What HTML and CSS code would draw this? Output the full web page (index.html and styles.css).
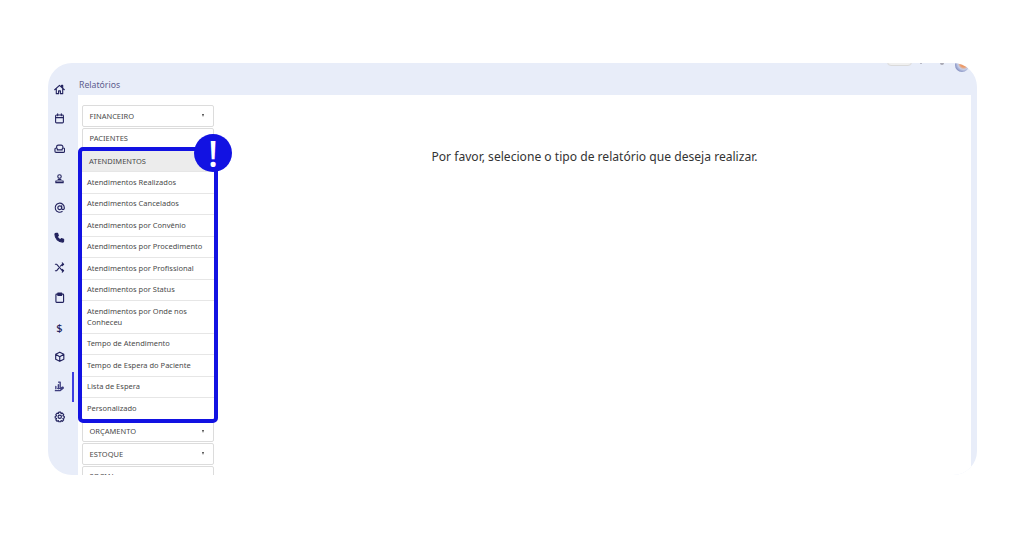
FILE: index.html
```html
<!DOCTYPE html>
<html lang="pt-BR">
<head>
<meta charset="utf-8">
<title>Relatórios</title>
<link rel="stylesheet" href="styles.css">
</head>
<body>
<div class="app">
  <nav class="rail">
    <svg class="ic" viewBox="0 0 24 24"><path d="M1.500 12.500 12 3l10.500 9.500M5 10v11h5v-6h4v6h5V10M16.500 6V3H19v5.500"/></svg>
    <svg class="ic" viewBox="0 0 24 24"><rect x="3.500" y="4.500" width="17" height="17" rx="2"/><path d="M3.500 10h17M8 1.500V6M16 1.500V6"/></svg>
    <svg class="ic ic-wide" viewBox="0 0 24 24"><path d="M5.500 10.500V8a3.500 3.500 0 0 1 3.500-3.500h6A3.500 3.500 0 0 1 18.500 8v2.500M2 13a2.500 2.500 0 0 1 5 0v1.500h10V13a2.500 2.500 0 0 1 5 0v4a2.500 2.500 0 0 1-2.500 2.500h-15A2.500 2.500 0 0 1 2 17z"/></svg>
    <svg class="ic" viewBox="0 0 24 24"><circle cx="12" cy="7.500" r="3.800"/><path d="M9 14h6M4 17.500h16V21H4z"/></svg>
    <svg class="ic ic-wide" viewBox="0 0 24 24"><circle cx="12" cy="12" r="4"/><path d="M16 8v5.500a2.800 2.800 0 0 0 5.500 0V12A9.500 9.500 0 1 0 17 20"/></svg>
    <svg class="ic" viewBox="0 0 24 24"><path class="solid" d="M4 3h4l1.500 5L7 10.500a13 13 0 0 0 6.500 6.500l2.500-2.500 5 1.500v4a2 2 0 0 1-2 2A17 17 0 0 1 2 5a2 2 0 0 1 2-2z"/></svg>
    <svg class="ic" viewBox="0 0 24 24"><path d="M3 5h3l12 14h3M3 19h3l4-5M14 9l4-4h3M18 2l3 3-3 3M18 16l3 3-3 3"/></svg>
    <svg class="ic ic-wide" viewBox="0 0 24 24"><rect x="4" y="4.500" width="16" height="17" rx="1.500"/><path class="solid" d="M8 2h8v5H8z"/></svg>
    <span class="dollar">$</span>
    <svg class="ic ic-wide" viewBox="0 0 24 24"><path d="M12 2.500 20.500 7v10L12 21.500 3.500 17V7zM3.500 7 12 12l8.500-5M12 12v9.500"/></svg>
    <span class="rail-active">
      <svg class="ic ic-soft" viewBox="0 0 24 24"><path d="M4 12v5M9.500 8v9M10 2.500h3.500V13M3 21h10l7-5.500a1.500 1.500 0 0 0-2-2L14.500 16H8"/></svg>
    </span>
    <svg class="ic ic-wide" viewBox="0 0 24 24"><path d="m10 2.500h4l.8 3 2.700-1.200 2.700 3.200-1.700 2.500 3 1.500v3l-3 1.200 1.700 2.800-2.700 3-2.700-1.500-.8 2.500h-4l-.8-2.500-2.700 1.500-2.700-3 1.700-2.800-3-1.200v-3l3-1.500-1.700-2.500 2.700-3.200 2.700 1.200z"/><circle cx="12" cy="12" r="3.500"/></svg>
  </nav>

  <div class="main">
    <header class="topbar">
      <h1 class="page-title">Relatórios</h1>
      <div class="top-tools">
        <span class="toggle"></span>
        <span class="dot dot-a"></span>
        <span class="dot dot-b"></span>
        <span class="avatar"></span>
      </div>
    </header>

    <section class="panel">
      <aside class="menu">
        <button class="group">FINANCEIRO<i class="caret"></i></button>
        <button class="group">PACIENTES</button>
        <div class="open-group">
          <div class="open-title">ATENDIMENTOS</div>
          <a class="item">Atendimentos Realizados</a>
          <a class="item">Atendimentos Cancelados</a>
          <a class="item">Atendimentos por Convênio</a>
          <a class="item">Atendimentos por Procedimento</a>
          <a class="item">Atendimentos por Profissional</a>
          <a class="item">Atendimentos por Status</a>
          <a class="item">Atendimentos por Onde nos Conheceu</a>
          <a class="item">Tempo de Atendimento</a>
          <a class="item">Tempo de Espera do Paciente</a>
          <a class="item">Lista de Espera</a>
          <a class="item">Personalizado</a>
          <div class="highlight"></div>
          <div class="badge">!</div>
        </div>
        <button class="group">ORÇAMENTO<i class="caret"></i></button>
        <button class="group">ESTOQUE<i class="caret"></i></button>
        <button class="group">SOCIAL<i class="caret"></i></button>
      </aside>
      <p class="prompt">Por favor, selecione o tipo de relatório que deseja realizar.</p>
    </section>
  </div>
</div>
</body>
</html>
```
FILE: styles.css
```css
* { box-sizing: border-box; }
html, body { margin: 0; height: 100%; background: #fff; }
body {
  padding: 63px 47px 63px 48px;
  font-family: "Noto Sans", "Open Sans", sans-serif;
  overflow: hidden;
}
.app {
  display: flex;
  height: 412px;
  background: #e8edf9;
  border-radius: 24px;
  overflow: hidden;
}
.rail {
  width: 30px;
  flex: none;
  display: flex;
  flex-direction: column;
  align-items: center;
  padding: 20.500px 7px 0 0;
  gap: 18.800px;
}
.ic {
  width: 11px;
  height: 11px;
  flex: none;
  fill: none;
  stroke: #23235f;
  stroke-width: 2.400;
  stroke-linejoin: round;
  stroke-linecap: round;
  display: block;
}
.ic-wide { width: 11.500px; height: 11.500px; margin: -0.250px 0; }
.ic .solid { fill: #23235f; }
.ic-soft { stroke: #3e3e80; stroke-width: 3; }
.dollar {
  height: 11px;
  line-height: 11px;
  font-size: 11px;
  font-weight: 500;
  color: #23235f;
}
.rail-active { position: relative; display: block; height: 11px; }
.rail-active::after {
  content: "";
  position: absolute;
  left: 18px;
  top: -9.500px;
  width: 1.700px;
  height: 30px;
  background: #3d3de0;
}
.main { flex: 1; min-width: 0; display: flex; flex-direction: column; }
.topbar {
  height: 32px;
  flex: none;
  position: relative;
  padding: 15.500px 0 0 1px;
}
.page-title {
  margin: 0;
  font-size: 8.700px;
  line-height: 12px;
  font-weight: 400;
  color: #5c5c8e;
}
.top-tools {
  position: absolute;
  right: 8px;
  top: -5px;
  display: flex;
  align-items: flex-end;
  height: 10px;
}
.toggle { width: 25px; height: 8px; border-radius: 4px; background: #f0f0f0; border: 1px solid #dadada; margin-right: 8px; margin-bottom: 2px; }
.dot { border-radius: 2px; background: #a8a8b4; }
.dot-a { width: 2px; height: 5px; margin-right: 18px; margin-bottom: 4px; }
.dot-b { width: 4px; height: 6px; margin-right: 11px; margin-bottom: 3px; }
.avatar { width: 14px; height: 14px; margin-bottom: -4px; border-radius: 50%; background: radial-gradient(circle at 62% 40%, #ee9a66 0 28%, #c6cfe8 48%, #8f9ac8 70%, #55588e 100%); }
.panel {
  flex: 1;
  min-height: 0;
  margin-right: 6px;
  background: #fff;
  display: flex;
  overflow: hidden;
  padding: 10px 0 0 4px;
}
.menu {
  width: 132px;
  flex: none;
  display: flex;
  flex-direction: column;
  gap: 1px;
}
.group {
  display: flex;
  align-items: center;
  justify-content: space-between;
  height: 21.500px;
  flex: none;
  padding: 0 9px 0 6.500px;
  background: #fff;
  border: 1px solid #dcdcdc;
  border-radius: 2px;
  font: 400 7.500px/10px "Noto Sans", sans-serif;
  color: #4a4a4a;
}
.caret {
  width: 0;
  height: 0;
  border-left: 1.500px solid transparent;
  border-right: 1.500px solid transparent;
  border-top: 3px solid #444;
}
.open-group { position: relative; display: flex; flex-direction: column; margin-bottom: 1px; }
.open-title {
  height: 21px;
  display: flex;
  align-items: center;
  padding-left: 7px;
  background: #ececec;
  font-size: 7.500px;
  color: #4a4a4a;
}
.item {
  display: block;
  padding: 4.500px 10px 5px 5px;
  font-size: 7.500px;
  line-height: 11px;
  color: #4a4a4a;
  border-top: 1px solid #e6e6e6;
  min-height: 21.500px;
}
.highlight {
  position: absolute;
  left: -4px;
  right: -4px;
  top: -3px;
  bottom: -4.500px;
  border: 4px solid #1212e2;
  border-radius: 5px;
  pointer-events: none;
}
.badge {
  position: absolute;
  left: 112px;
  top: -16.500px;
  width: 38px;
  height: 38px;
  border-radius: 50%;
  background: #1212e2;
  color: #fff;
  font-size: 37px;
  font-weight: 500;
  line-height: 38px;
  text-align: center;
}
.prompt {
  flex: 1;
  margin: 0;
  padding: 43px 0 0 4px;
  text-align: center;
  font-size: 12.100px;
  line-height: 17px;
  color: #333;
}
```
